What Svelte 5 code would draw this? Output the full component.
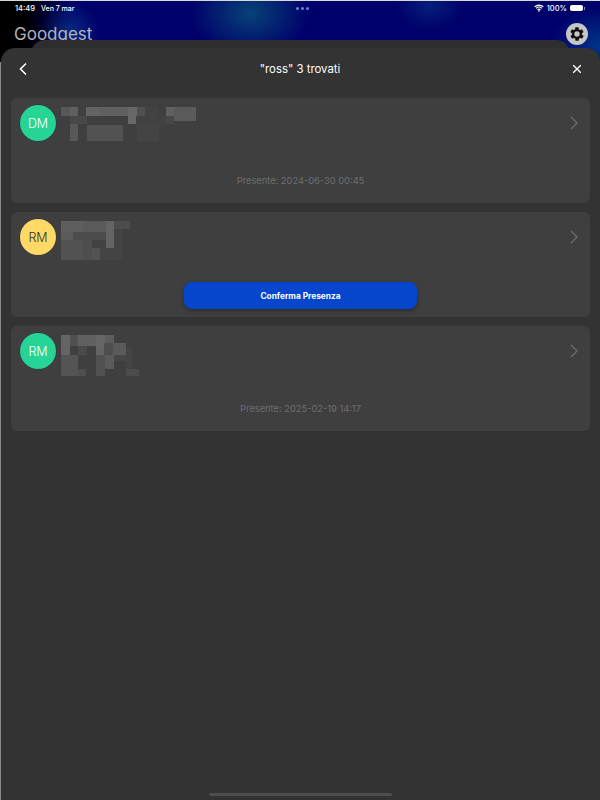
<script lang="ts">
  // [x, y, w, h, grey] blocks of the pixelated names, relative to each mosaic
  type Block = [number, number, number, number, number];

  interface Guest {
    initials: string;
    color: string;
    dark: boolean;
    presence: string | null;
    mosaicWidth: number;
    mosaicHeight: number;
    blocks: Block[];
  }

  const guests: Guest[] = [
    {
      initials: 'DM',
      color: '#26d496',
      dark: false,
      presence: 'Presente: 2024-06-30 00:45',
      mosaicWidth: 136,
      mosaicHeight: 34,
      blocks: [
        [0, 0, 9, 9, 88],
        [9, 0, 8, 9, 96],
        [25, 0, 13, 9, 100],
        [38, 0, 29, 9, 96],
        [67, 0, 9, 9, 104],
        [76, 0, 8, 9, 80],
        [84, 0, 13, 9, 66],
        [105, 0, 8, 9, 96],
        [113, 0, 22, 14, 90],
        [9, 9, 17, 8, 72],
        [67, 9, 8, 8, 104],
        [75, 9, 30, 9, 66],
        [105, 9, 8, 8, 72],
        [9, 17, 8, 17, 88],
        [26, 18, 36, 16, 82],
        [76, 18, 22, 16, 68]
      ]
    },
    {
      initials: 'RM',
      color: '#ffd966',
      dark: true,
      presence: null,
      mosaicWidth: 69,
      mosaicHeight: 39,
      blocks: [
        [0, 0, 22, 11, 94],
        [22, 0, 23, 11, 90],
        [45, 0, 8, 27, 100],
        [53, 0, 8, 39, 68],
        [53, 0, 16, 8, 76],
        [12, 11, 33, 8, 76],
        [0, 11, 12, 8, 90],
        [0, 19, 22, 20, 82],
        [22, 19, 9, 20, 78],
        [31, 19, 14, 8, 66],
        [31, 27, 8, 12, 82],
        [39, 27, 14, 12, 68]
      ]
    },
    {
      initials: 'RM',
      color: '#26d496',
      dark: false,
      presence: 'Presente: 2025-02-19 14:17',
      mosaicWidth: 78,
      mosaicHeight: 41,
      blocks: [
        [0, 0, 9, 20, 100],
        [9, 0, 8, 11, 80],
        [17, 0, 18, 11, 96],
        [35, 0, 9, 11, 102],
        [44, 0, 9, 8, 92],
        [17, 11, 9, 9, 74],
        [35, 11, 8, 9, 100],
        [43, 8, 9, 12, 78],
        [52, 8, 13, 12, 90],
        [65, 12, 6, 29, 68],
        [0, 20, 17, 21, 84],
        [17, 34, 8, 7, 78],
        [35, 20, 9, 21, 80],
        [44, 20, 9, 14, 90],
        [53, 20, 12, 6, 70],
        [65, 34, 13, 7, 76]
      ]
    }
  ];
</script>

<div class="screen">
  <div class="status">
    <span class="status__time">14:49</span>
    <span class="status__date">Ven 7 mar</span>
    <span class="status__dots"><i></i><i></i><i></i></span>
    <svg class="status__wifi" viewBox="0 0 16 12" width="10" height="8">
      <path d="M1 4.2a10 10 0 0 1 14 0M3.4 6.6a6.6 6.6 0 0 1 9.2 0M5.7 8.9a3.3 3.3 0 0 1 4.6 0" fill="none" stroke="#fff" stroke-width="1.9" />
      <circle cx="8" cy="10.6" r="1.3" fill="#fff" />
    </svg>
    <span class="status__battery-label">100%</span>
    <span class="status__battery"><b></b></span>
    <span class="status__nub"></span>
  </div>

  <div class="brand">
    <span class="brand__name">Goodgest</span>
    <button class="brand__settings" aria-label="Impostazioni">
      <svg viewBox="0 0 24 24" width="16" height="16">
        <path fill="#111" fill-rule="evenodd" d="M19.4 13c.1-.3.1-.7.1-1s0-.7-.1-1l2.1-1.6c.2-.2.2-.4.1-.6l-2-3.5c-.1-.2-.4-.3-.6-.2l-2.5 1c-.5-.4-1.1-.7-1.7-1l-.4-2.6c0-.3-.2-.5-.5-.5h-4c-.3 0-.5.2-.5.5l-.4 2.6c-.6.3-1.2.6-1.7 1l-2.5-1c-.2-.1-.5 0-.6.2l-2 3.5c-.1.2-.1.4.1.6L4.6 11c-.1.3-.1.7-.1 1s0 .7.1 1l-2.1 1.6c-.2.2-.2.4-.1.6l2 3.5c.1.2.4.3.6.2l2.5-1c.5.4 1.1.7 1.7 1l.4 2.6c0 .3.2.5.5.5h4c.3 0 .5-.2.5-.5l.4-2.6c.6-.3 1.2-.6 1.7-1l2.5 1c.2.1.5 0 .6-.2l2-3.5c.1-.2.1-.4-.1-.6L19.4 13zM12 16a4 4 0 1 1 0-8 4 4 0 0 1 0 8z" />
      </svg>
    </button>
  </div>

  <div class="back-sheet"></div>

  <div class="sheet">
    <header class="sheet__header">
      <button class="icon-btn" aria-label="Indietro">
        <svg viewBox="0 0 12 14" width="12" height="14">
          <path d="M9 1.5 3.5 7 9 12.5" fill="none" stroke="#fff" stroke-width="1.6" />
        </svg>
      </button>
      <h1 class="sheet__title">"ross" 3 trovati</h1>
      <button class="icon-btn" aria-label="Chiudi">
        <svg viewBox="0 0 10 10" width="10" height="10">
          <path d="M1.2 1.2l7.6 7.6M8.8 1.2 1.2 8.8" fill="none" stroke="#fff" stroke-width="1.3" />
        </svg>
      </button>
    </header>

    <div class="list">
      {#each guests as guest}
        <article class="card">
          <div class="card__top">
            <span class="avatar" class:avatar--dark={guest.dark} style="background: {guest.color}">
              {guest.initials}
            </span>
            <svg class="mosaic" width={guest.mosaicWidth} height={guest.mosaicHeight} shape-rendering="crispEdges">
              {#each guest.blocks as [x, y, w, h, grey]}
                <rect {x} {y} width={w} height={h} fill="rgb({grey},{grey},{grey})" />
              {/each}
            </svg>
            <svg class="chevron" viewBox="0 0 8 14" width="8" height="14">
              <path d="M1 1l6 6-6 6" fill="none" stroke="#6a6a6a" stroke-width="1.4" />
            </svg>
          </div>
          <div class="card__bottom">
            {#if guest.presence}
              <span class="presence">{guest.presence}</span>
            {:else}
              <button class="confirm">Conferma Presenza</button>
            {/if}
          </div>
        </article>
      {/each}
    </div>

    <div class="home-bar"></div>
  </div>
</div>

<style>
  :global(body) {
    background: #333;
  }

  .screen {
    position: relative;
    width: 600px;
    height: 800px;
    overflow: hidden;
    font-family: Inter, "Liberation Sans", sans-serif;
    border-top: 1px solid #d8d8d8;
    box-sizing: border-box;
    background:
      radial-gradient(circle 30px at 70px 30px, rgba(15, 75, 150, 0.55), transparent),
      radial-gradient(ellipse 60px 45px at 250px 12px, rgba(10, 95, 125, 0.7), transparent),
      radial-gradient(ellipse 35px 25px at 430px 5px, rgba(10, 60, 140, 0.5), transparent),
      radial-gradient(ellipse 50px 40px at 600px 45px, rgba(0, 60, 140, 0.9), transparent),
      linear-gradient(90deg, #000 0, #000 25px, #00006a 70px, #00006a 100%);
  }

  .status {
    display: flex;
    align-items: center;
    height: 14px;
    padding: 0 15px;
    color: #fff;
    font-size: 7.5px;
    font-weight: 500;
  }

  .status__date {
    margin-left: 6px;
    font-size: 7px;
  }

  .status__dots {
    display: flex;
    gap: 2px;
    margin-left: 221px;
    margin-right: auto;
  }

  .status__dots i {
    width: 3px;
    height: 3px;
    border-radius: 50%;
    background: #6f7fe0;
  }

  .status__wifi {
    margin-right: 3px;
  }

  .status__battery {
    display: flex;
    width: 13px;
    height: 6px;
    margin-left: 3px;
    padding: 1px;
    border-radius: 2px;
    background: #fff;
    box-sizing: border-box;
  }

  .status__battery b {
    flex: 1;
    background: #fff;
  }

  .status__nub {
    width: 1px;
    height: 3px;
    margin-left: 1px;
    background: #8c8cc0;
  }

  .brand {
    display: flex;
    align-items: center;
    justify-content: space-between;
    padding: 7px 12px 0 14px;
  }

  .brand__name {
    color: #b4b4b4;
    font-size: 17px;
    line-height: 24px;
  }

  .brand__settings {
    display: flex;
    align-items: center;
    justify-content: center;
    width: 22px;
    height: 22px;
    padding: 0;
    border: 0;
    border-radius: 50%;
    background: #c6c6c6;
  }

  .back-sheet {
    position: absolute;
    top: 39px;
    left: 31px;
    right: 30px;
    height: 30px;
    border-radius: 14px 14px 0 0;
    background: #2e2e2e;
  }

  .sheet {
    position: absolute;
    top: 47px;
    left: 1px;
    right: 0;
    bottom: 0;
    display: flex;
    flex-direction: column;
    border-radius: 14px 14px 0 0;
    background: #333;
  }

  /* thin light edge of the modal on the left side */
  .sheet::before {
    content: "";
    position: absolute;
    top: 14px;
    left: -1px;
    bottom: 0;
    width: 1px;
    background: #8a8a8a;
  }

  .sheet__header {
    display: flex;
    align-items: center;
    justify-content: space-between;
    height: 42px;
    padding: 0 15px 0 14px;
    margin-bottom: 8px;
  }

  .icon-btn {
    display: flex;
    align-items: center;
    justify-content: center;
    width: 16px;
    height: 16px;
    padding: 0;
    border: 0;
    background: none;
  }

  .sheet__title {
    margin: 0;
    color: #fff;
    font-size: 11.4px;
    font-weight: 400;
  }

  .list {
    display: flex;
    flex-direction: column;
    gap: 9px;
    padding: 0 10px;
  }

  .card {
    display: flex;
    flex-direction: column;
    height: 105px;
    padding-top: 7px;
    border-radius: 6px;
    background: #3f3f3f;
    box-sizing: border-box;
  }

  .card__top {
    display: flex;
    align-items: flex-start;
    height: 57px;
    padding: 0 12px 0 9px;
  }

  .avatar {
    display: flex;
    align-items: center;
    justify-content: center;
    flex: none;
    width: 36px;
    height: 36px;
    border-radius: 50%;
    box-shadow: 0 0 0 0.5px #3a2a44;
    color: #fff;
    font-size: 12.5px;
    font-weight: 300;
  }

  .avatar--dark {
    color: #333;
  }

  .mosaic {
    margin: 2px 0 0 5px;
    flex: none;
  }

  .chevron {
    margin: 11px 0 0 auto;
  }

  .card__bottom {
    display: flex;
    align-items: center;
    justify-content: center;
    height: 39px;
  }

  .presence {
    color: #6e6e6e;
    font-size: 9.3px;
    margin-bottom: 2px;
  }

  .confirm {
    width: 233px;
    height: 27px;
    padding: 0;
    border: 0;
    border-radius: 8px;
    background: #0546cc;
    box-shadow: 0 2px 4px rgba(0, 0, 0, 0.3);
    color: #fff;
    font-family: inherit;
    font-size: 8.3px;
    font-weight: 700;
  }

  .home-bar {
    width: 183px;
    height: 3px;
    margin: auto auto 4px;
    border-radius: 2px;
    background: #4e4e4e;
  }
</style>
